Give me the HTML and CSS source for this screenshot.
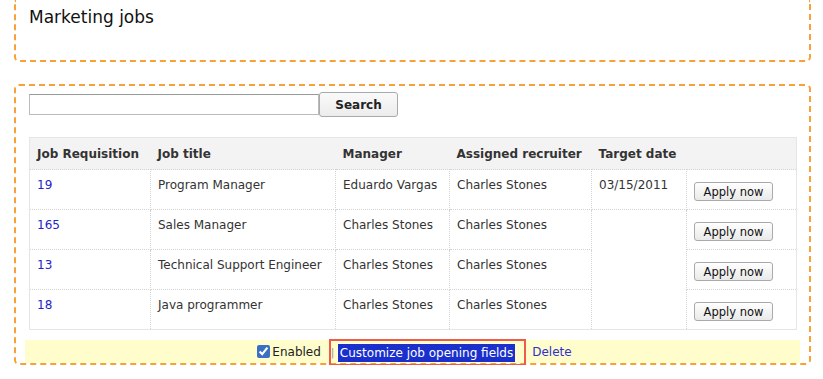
FILE: index.html
```html
<!DOCTYPE html>
<html lang="en">
<head>
    <meta charset="UTF-8">
    <title>Marketing jobs</title>
    <link rel="stylesheet" href="styles.css">
</head>
<body>
    <div class="page">
        <!-- Title -->
        <div class="box box-title">
            <h1>Marketing jobs</h1>
        </div>

        <!-- Job openings -->
        <div class="box box-jobs">
            <form class="search" onsubmit="return false">
                <input type="text" class="search-input">
                <button type="submit" class="search-btn">Search</button>
            </form>

            <table class="jobs">
                <colgroup>
                    <col class="c-req">
                    <col class="c-title">
                    <col class="c-mgr">
                    <col class="c-rec">
                    <col class="c-date">
                    <col class="c-act">
                </colgroup>
                <thead>
                    <tr>
                        <th>Job Requisition</th>
                        <th>Job title</th>
                        <th>Manager</th>
                        <th>Assigned recruiter</th>
                        <th>Target date</th>
                        <th></th>
                    </tr>
                </thead>
                <tbody>
                    <tr>
                        <td><a href="#">19</a></td>
                        <td>Program Manager</td>
                        <td>Eduardo Vargas</td>
                        <td>Charles Stones</td>
                        <td>03/15/2011</td>
                        <td><button class="apply">Apply now</button></td>
                    </tr>
                    <tr>
                        <td><a href="#">165</a></td>
                        <td>Sales Manager</td>
                        <td>Charles Stones</td>
                        <td>Charles Stones</td>
                        <td rowspan="3"></td>
                        <td><button class="apply">Apply now</button></td>
                    </tr>
                    <tr>
                        <td><a href="#">13</a></td>
                        <td>Technical Support Engineer</td>
                        <td>Charles Stones</td>
                        <td>Charles Stones</td>
                        <td><button class="apply">Apply now</button></td>
                    </tr>
                    <tr>
                        <td><a href="#">18</a></td>
                        <td>Java programmer</td>
                        <td>Charles Stones</td>
                        <td>Charles Stones</td>
                        <td><button class="apply">Apply now</button></td>
                    </tr>
                </tbody>
            </table>

            <div class="actions">
                <label class="enabled"><input type="checkbox" checked> Enabled</label>
                <span class="highlight"><span class="sep">|</span><a href="#" class="selected">Customize job opening fields</a></span>
                <a href="#" class="delete">Delete</a>
            </div>
        </div>
    </div>
</body>
</html>
```

FILE: styles.css
```css
body {
    margin: 0;
    font-family: "DejaVu Sans", Verdana, sans-serif;
    font-size: 12px;
    color: #333;
    background: #fff;
}
a {
    color: #2424c8;
    text-decoration: none;
}
.page {
    padding: 0 12px 0 14px;
}
.box {
    border: 2px dashed #f7a238;
    border-radius: 5px;
}
.box-title {
    border-top: none;
    border-radius: 0 0 5px 5px;
    height: 53px;
    padding: 7px 13px 0;
}
.box-title h1 {
    margin: 0;
    font-size: 17px;
    font-weight: normal;
    color: #111;
}
.box-jobs {
    margin-top: 22px;
    padding: 6px 9px 0;
}
.search {
    display: flex;
    align-items: center;
    margin: 0 0 20px 4px;
}
.search-input {
    width: 290px;
    height: 21px;
    box-sizing: border-box;
    border: 1px solid #bbb;
    border-top-color: #999;
    margin: 0;
    padding: 2px 4px;
}
.search-btn {
    width: 79px;
    height: 25px;
    margin: 0;
    border: 1px solid #aaa;
    border-radius: 3px;
    background: linear-gradient(#fafafa, #ececec);
    font-family: "DejaVu Sans", Verdana, sans-serif;
    font-size: 12px;
    font-weight: bold;
    color: #222;
}
.jobs {
    margin-left: 4px;
    width: 767px;
    border-collapse: collapse;
    border: 1px solid #e6e6e6;
    table-layout: fixed;
}
.jobs .c-req { width: 121px; }
.jobs .c-title { width: 185px; }
.jobs .c-mgr { width: 114px; }
.jobs .c-rec { width: 142px; }
.jobs .c-date { width: 95px; }
.jobs .c-act { width: 110px; }
.jobs th {
    background: #f3f3f3;
    text-align: left;
    font-weight: bold;
    padding: 9px 7px 8px;
    color: #333;
    white-space: nowrap;
}
.jobs td {
    height: 40px;
    box-sizing: border-box;
    vertical-align: top;
    padding: 8px 7px 0;
    border: 1px dotted #d4d4d4;
    white-space: nowrap;
}
.jobs td:first-child {
    border-left: none;
}
.jobs td:last-child {
    border-right: none;
}
.jobs tbody tr:last-child td {
    border-bottom: none;
}
.apply {
    margin: 4px 0 0 0;
    width: 79px;
    height: 19px;
    padding: 0;
    border: 1px solid #aaa;
    border-radius: 3px;
    background: linear-gradient(#fff, #e9e9e9);
    font-family: "DejaVu Sans", "Lucida Grande", sans-serif;
    font-size: 11.5px;
    color: #111;
}
.actions {
    display: flex;
    align-items: center;
    justify-content: center;
    height: 23px;
    margin-top: 10px;
    background: #fefdcb;
}
.enabled {
    display: flex;
    align-items: center;
    margin-left: 4px;
    color: #222;
}
.enabled input {
    margin: 0 2px 0 0;
    width: 13px;
    height: 13px;
    accent-color: #3a6fc4;
}
.highlight {
    margin-left: 8px;
    height: 23px;
    display: flex;
    align-items: center;
    padding: 0 9px 0 0;
    border: 2px solid #ec5b4b;
    position: relative;
    top: 1px;
}
.sep {
    color: #999;
    font-size: 11px;
    width: 7px;
}
.selected {
    background: #1a2fcc;
    color: #fff;
    padding: 2px;
}
.delete {
    margin-left: 6px;
    color: #3030cc;
}
```
